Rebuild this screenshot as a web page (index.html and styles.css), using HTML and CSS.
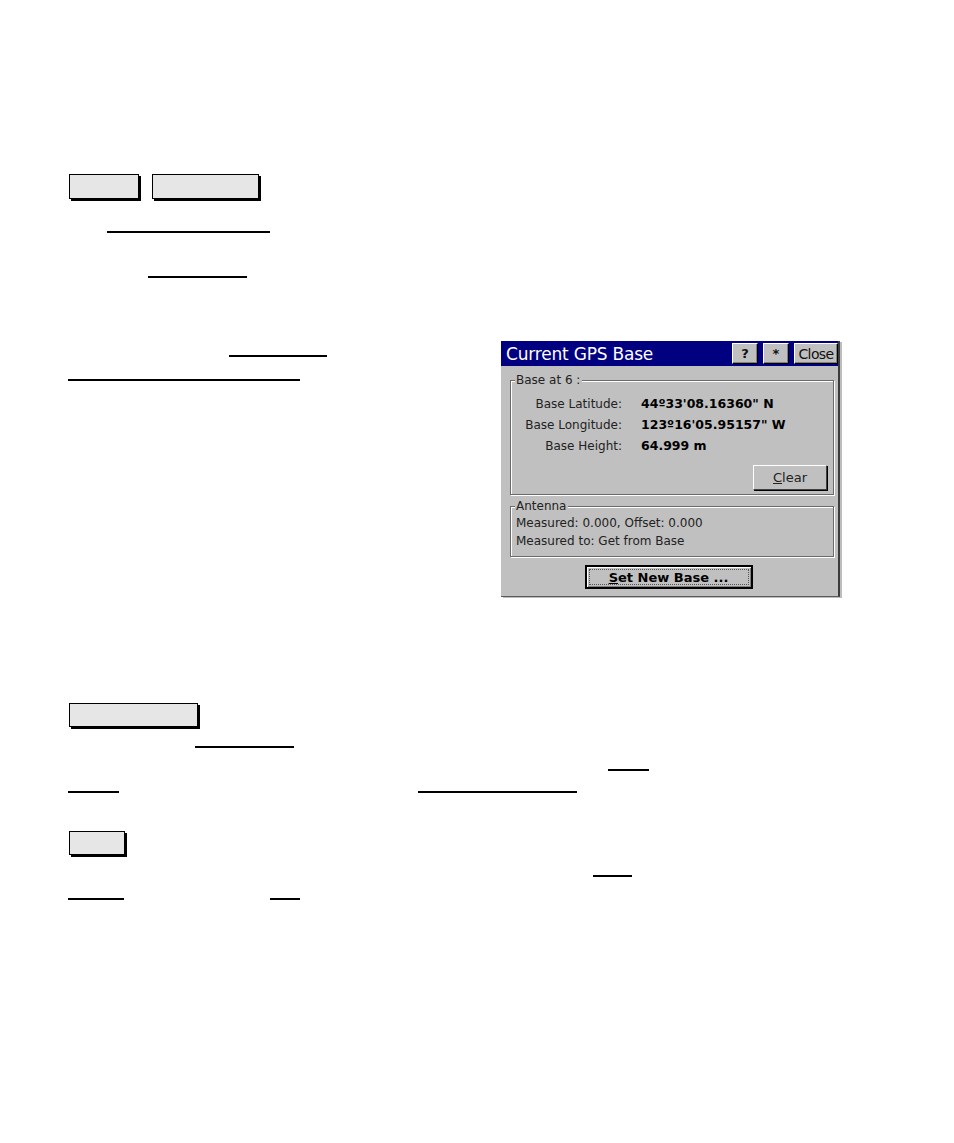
FILE: index.html
```html
<!DOCTYPE html>
<html>
<head>
<meta charset="utf-8">
<link rel="stylesheet" href="styles.css">
</head>
<body>
<div class="page">
  <div class="btnrow">
    <div class="kbox kb1"></div>
    <div class="kbox kb2"></div>
  </div>
  <div class="ul u1"></div>
  <div class="ul u2"></div>

  <div class="mid">
    <div class="leftcol">
      <div class="ul u3"></div>
      <div class="ul u4"></div>
    </div>
    <div class="dialog">
      <div class="titlebar">
        <span class="title">Current GPS Base</span>
        <div class="tbtns">
          <div class="tbtn sq">?</div>
          <div class="tbtn sq">*</div>
          <div class="tbtn close">Close</div>
        </div>
      </div>
      <div class="dbody">
        <div class="group g1">
          <span class="glabel">Base at 6 :</span>
          <div class="frow"><span class="flabel">Base Latitude:</span><span class="fval">44º33'08.16360" N</span></div>
          <div class="frow"><span class="flabel">Base Longitude:</span><span class="fval">123º16'05.95157" W</span></div>
          <div class="frow"><span class="flabel">Base Height:</span><span class="fval">64.999 m</span></div>
          <div class="clearrow"><div class="wbtn clear"><u>C</u>lear</div></div>
        </div>
        <div class="group g2">
          <span class="glabel">Antenna</span>
          <div class="aline">Measured: 0.000, Offset: 0.000</div>
          <div class="aline">Measured to: Get from Base</div>
        </div>
        <div class="setrow">
          <div class="setbtn"><div class="focus"><u>S</u>et New Base ...</div></div>
        </div>
      </div>
    </div>
  </div>

  <div class="kbox kb3"></div>
  <div class="ul u5"></div>
  <div class="ul u6"></div>
  <div class="lrow r1">
    <div class="ul u7"></div>
    <div class="ul u8"></div>
  </div>
  <div class="kbox kb4"></div>
  <div class="ul u9"></div>
  <div class="lrow r2">
    <div class="ul u10"></div>
    <div class="ul u11"></div>
  </div>
</div>
</body>
</html>
```
FILE: styles.css
```css
html, body { margin: 0; padding: 0; background: #fff; }
body { font-family: "DejaVu Sans", Verdana, sans-serif; width: 954px; height: 1143px; overflow: hidden; }
.page { padding-top: 174px; position: relative; }

.btnrow { display: flex; gap: 13px; margin-left: 69px; height: 25px; }
.kbox { box-sizing: border-box; background: #e6e6e6; border: 1px solid #000; box-shadow: 2px 2px 0 #000; height: 25px; }
.kb1 { width: 70px; }
.kb2 { width: 107px; }
.kb3 { width: 129px; height: 24px; margin-left: 69px; margin-top: 106px; }
.kb4 { width: 56px; height: 24px; margin-left: 69px; margin-top: 38px; }

.ul { height: 0; border-top: 2px solid #000; }
.u1 { margin-left: 107px; width: 163px; margin-top: 32px; }
.u2 { margin-left: 148px; width: 99px; margin-top: 43px; }

.mid { display: flex; margin-top: 63px; }
.leftcol { width: 501px; padding-top: 14px; }
.u3 { margin-left: 229px; width: 98px; }
.u4 { margin-left: 68px; width: 232px; margin-top: 22px; }

.u5 { margin-left: 195px; width: 99px; margin-top: 19px; }
.u6 { margin-left: 608px; width: 41px; margin-top: 21px; }
.lrow { display: flex; }
.r1 { margin-top: 20px; }
.u7 { margin-left: 68px; width: 51px; }
.u8 { margin-left: 299px; width: 159px; }
.u9 { margin-left: 593px; width: 39px; margin-top: 20px; }
.r2 { margin-top: 21px; }
.u10 { margin-left: 68px; width: 56px; }
.u11 { margin-left: 146px; width: 30px; }

/* dialog */
.dialog { box-sizing: border-box; width: 339px; height: 256px; background: #c0c0c0; border-right: 2px solid #3c3c3c; border-bottom: 1px solid #5a5a5a; box-shadow: 2px 1px 0 #bdbdbd; font-size: 12px; color: #000; }
.titlebar { height: 25px; background: #000080; display: flex; align-items: center; justify-content: space-between; }
.title { color: #fff; font-size: 17px; padding-left: 5px; letter-spacing: -0.2px; }
.tbtns { display: flex; gap: 5px; }
.tbtn { box-sizing: border-box; height: 21px; background: #c0c0c0; border: 1px solid; border-color: #fff #000 #000 #fff; box-shadow: inset -1px -1px 0 #808080; display: flex; align-items: center; justify-content: center; font-size: 13px; font-weight: bold; color: #111; }
.sq { width: 26px; }
.close { width: 44px; font-weight: normal; font-size: 14px; letter-spacing: -0.6px; }

.dbody { padding: 14px 0 0 9px; }
.group { position: relative; box-sizing: border-box; width: 324px; border: 1px solid #6a6a6a; box-shadow: 1px 1px 0 #fff, inset 1px 1px 0 #fff; }
.glabel { position: absolute; top: -8px; left: 4px; background: #c0c0c0; padding: 0 2px 0 1px; line-height: 15px; font-size: 12px; color: #222; }
.g1 { height: 115px; padding-top: 12px; }
.frow { display: flex; height: 21px; align-items: center; }
.flabel { width: 111px; text-align: right; color: #222; }
.fval { margin-left: 19px; font-weight: bold; font-size: 12.5px; }
.clearrow { display: flex; justify-content: flex-end; padding-right: 6px; margin-top: 9px; }
.wbtn { box-sizing: border-box; width: 74px; height: 25px; display: flex; align-items: center; justify-content: center; background: #c0c0c0; border: 1px solid; border-color: #fff #404040 #404040 #fff; box-shadow: 1px 1px 0 #000; font-size: 13px; color: #222; }

.g2 { height: 51px; margin-top: 11px; padding: 7px 0 0 5px; }
.aline { line-height: 18px; color: #222; }

.setrow { display: flex; width: 324px; justify-content: center; margin-top: 8px; }
.setbtn { box-sizing: border-box; width: 168px; height: 24px; border: 2px solid #000; background: #c0c0c0; padding: 2px; box-shadow: inset 1px 1px 0 #fff, inset -1px -1px 0 #808080; margin-left: -7px; }
.focus { box-sizing: border-box; height: 100%; border: 1px dotted #555; display: flex; align-items: center; justify-content: center; font-weight: bold; font-size: 13px; }
```
